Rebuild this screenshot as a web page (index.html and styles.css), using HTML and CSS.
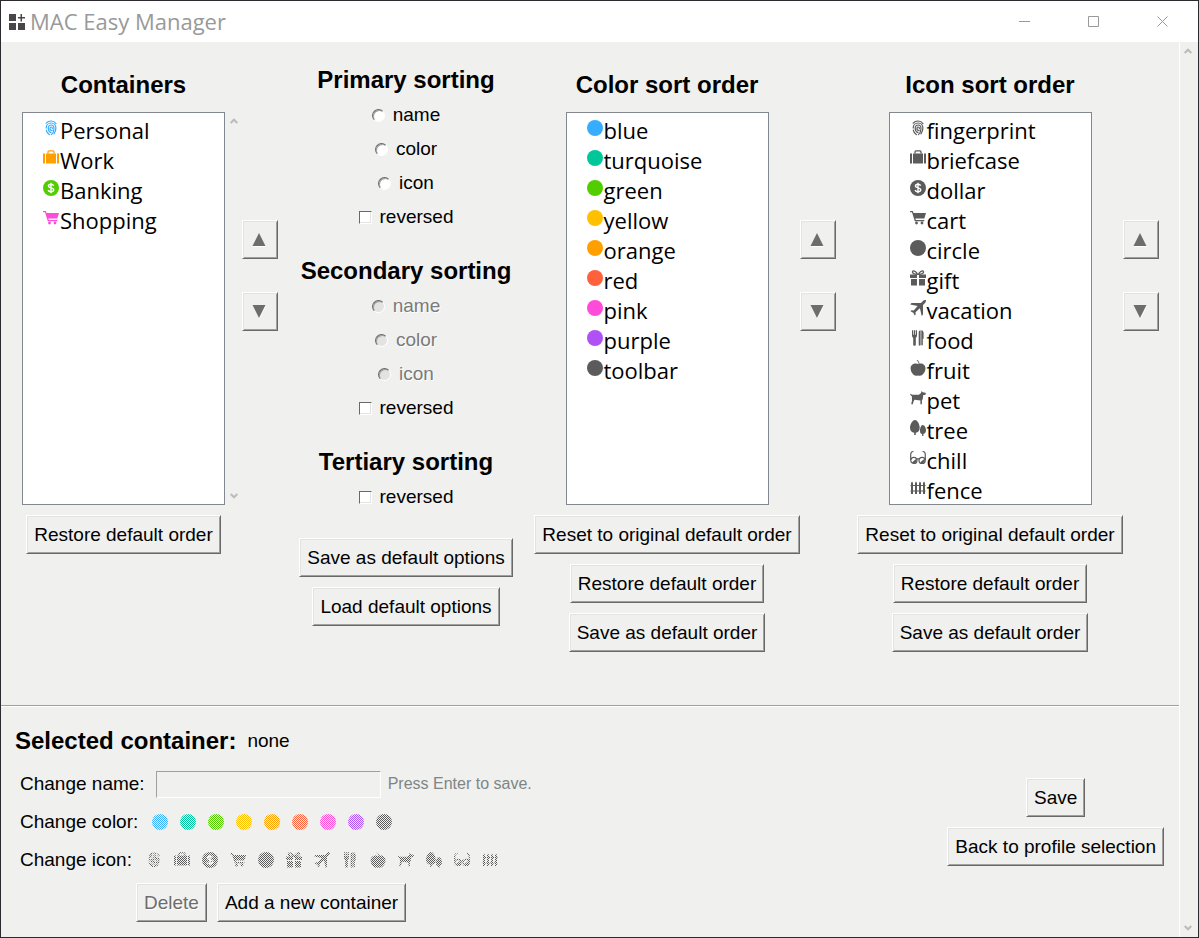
FILE: index.html
```html
<!DOCTYPE html>
<html lang="en">
<head>
<meta charset="utf-8">
<meta name="viewport" content="width=device-width, initial-scale=1">
<title>MAC Easy Manager</title>
<link rel="stylesheet" href="styles.css">
</head>
<body>
<svg class="sprite" aria-hidden="true">
  <symbol id="fingerprint" viewBox="0 0 16 16"><g fill="none" stroke="currentColor" stroke-width="1.200" stroke-linecap="round"><path d="M3.200 3.200C4.400 1.800 6 1 8 1c2.200 0 3.900 1 5 2.600"/><path d="M3.200 8C3.200 5 5.400 3 8 3c2.800 0 4.900 2 4.900 5 0 2.300-.8 4.200-2 5.800"/><path d="M3.300 10.200c.3 1.800 1.400 3.400 3.200 4.500"/><path d="M8.500 14.600c1.600-1.400 2.500-3.600 2.500-6.200C11 6.300 9.800 5 8.100 5 6.400 5 5.200 6.200 5.200 8c0 2.200 1 4 2.800 4.600"/><path d="M9.200 10.600C7.900 10.700 7 9.700 7 8.400c0-.8.500-1.400 1.200-1.400.8 0 1.200.7 1.200 1.600"/></g></symbol>
  <symbol id="briefcase" viewBox="0 0 16 16"><path fill="currentColor" d="M0 3.500h2v10H0zM14 3.500h2v10h-2zM3 3.500h10v10H3z"/><path fill="none" stroke="currentColor" stroke-width="1.300" d="M5 3.600V1.900Q5 .9 6 .9h4q1 0 1 1v1.700"/></symbol>
  <symbol id="dollar" viewBox="0 0 16 16"><circle cx="8" cy="8" r="8" fill="currentColor"/><path class="coin" fill="none" stroke-width="1.400" d="M10.600 5.800C10.300 4.800 9.200 4.300 8 4.300c-1.600 0-2.600.7-2.600 1.800C5.400 8.500 10.700 7.200 10.700 9.800c0 1.200-1.100 1.900-2.700 1.900-1.500 0-2.600-.6-2.900-1.700M8 2.800v10.400"/></symbol>
  <symbol id="cart" viewBox="0 0 16 16"><path fill="currentColor" d="M0 1h2.800l.8 2H16l-1.700 5.600H5.400l.4 1.400h8.500v1.200H4.800L2 2.200H0z"/><circle cx="6.500" cy="13" r="1.400" fill="currentColor"/><circle cx="12" cy="13" r="1.400" fill="currentColor"/></symbol>
  <symbol id="circle" viewBox="0 0 16 16"><circle cx="8" cy="8" r="8" fill="currentColor"/></symbol>
  <symbol id="gift" viewBox="0 0 16 16"><path fill="currentColor" d="M0 4.500h7v3.400H0zM9 4.500h7v3.400H9zM1 9h6v6.500H1zM9 9h6v6.500H9z"/><path fill="none" stroke="currentColor" stroke-width="1.300" d="M7.600 4.400C6.500 1.500 3.300 0 2.500 1.600 2 3 4 4.300 7.600 4.400zM8.400 4.400C9.500 1.500 12.700 0 13.500 1.600 14 3 12 4.300 8.400 4.400z"/></symbol>
  <symbol id="vacation" viewBox="0 0 16 16"><path fill="currentColor" d="M16 0c.2 1.300-.3 2.300-1 3l-2 2v9.500L11.700 16 9.900 8.300 5.500 12.200l.2 2.200-1 1L3.300 12.700.5 11.300l1-1 2.200.2L7.600 6.100.2 4.400 1.500 3H11l2-2c.7-.7 1.700-1.100 3-1z"/></symbol>
  <symbol id="food" viewBox="0 0 16 16"><path fill="currentColor" d="M2 .3h1.200v4.500h.7V.3h1.200v4.500h.7V.3H7v5.200c0 1.200-.6 1.900-1.200 2.300v7c0 1.300-2.600 1.300-2.600 0v-7C2.600 7.400 2 6.700 2 5.500zM8.700 2.500C8.700 1 9.600.3 10.600.3v14.500c0 1.200-1.900 1.200-1.900 0zM11.300.3c1.400 0 2.300 1 2.300 2.900v5.600h-.8v6.400h-1.500z"/></symbol>
  <symbol id="fruit" viewBox="0 0 16 16"><path fill="currentColor" d="M8.700 4.100C8.600 2.400 8 1 6.500.4L7.400 0c1.200.7 1.900 2 2 3.600 2.700-.7 6.100.8 6.100 4.700 0 4.200-3.300 7.500-5.500 7.500-.8 0-1.300-.3-2-.3s-1.200.3-2 .3C3.800 15.800.6 12.500.6 8.300c0-4.100 4.200-5.700 8.100-4.200z"/></symbol>
  <symbol id="pet" viewBox="0 0 16 16"><path fill="currentColor" d="M0 3.700c1 0 1.500 1 2.700 1h6.200L11 3l.5-2 1.300 1.300 2.700.5.500 1.200-1.200.9-1.500.1-.6 4.300-.8 1v3.900h-1.500v-3.700l-5.800-.7-1 1.500-.8 2.900H1.200L2 10.400l-.1-4.100C1.200 6 .4 5.300 0 3.700z"/></symbol>
  <symbol id="tree" viewBox="0 0 16 16"><path fill="currentColor" d="M5 0c2.700 0 4.700 4.800 4.700 7.500 0 3.300-1.500 5-3.900 5.300V15H4.200v-2.200C1.700 12.500 0 10.800 0 7.500 0 4.800 2.300 0 5 0z"/><path fill="currentColor" d="M12.700 5C14.500 5 16 8 16 10c0 2.300-1 3.700-2.600 4V16h-1.300v-2c-1.600-.3-2.100-1.500-2.100-3.600 0-2 .9-5.400 2.700-5.400z"/></symbol>
  <symbol id="chill" viewBox="0 0 16 16"><g fill="none" stroke="currentColor" stroke-width="1.200"><path d="M3.500 1.500C1.500 1.300.7 3 .7 5v5M12.500 1.500c2-.2 2.800 1.500 2.800 3.500v5M6.500 8.800h3"/><circle cx="3.900" cy="10.400" r="3.100"/><circle cx="12.100" cy="10.400" r="3.100"/></g><path fill="currentColor" d="M6.600 8.400v2.900a2.900 2.900 0 0 1-4.700 1.300zM14.800 8.400v2.900a2.900 2.900 0 0 1-4.700 1.300z"/></symbol>
  <symbol id="fence" viewBox="0 0 16 16"><path fill="currentColor" d="M1 3l1-1.500L3 3v11H1zM5 3l1-1.500L7 3v11H5zM9 3l1-1.500L11 3v11H9zM13 3l1-1.500L15 3v11h-2zM.500 5H15.500v1H.500zM.500 10.500H15.500v1H.500z"/></symbol>
  <symbol id="up" viewBox="0 0 14 14"><path fill="#fff" d="M7.500 1L14 14H1z"/><path fill="#6d6d6d" d="M7 0l6.500 13H.5z"/></symbol>
  <symbol id="down" viewBox="0 0 14 14"><path fill="#fff" d="M1 1h13L7.500 14z"/><path fill="#6d6d6d" d="M.5 0h13L7 13z"/></symbol>
  <symbol id="chev-up" viewBox="0 0 8 6"><path fill="none" stroke="#bbb" stroke-width="2" d="M.7 5L4 1.700 7.300 5"/></symbol>
  <symbol id="chev-down" viewBox="0 0 8 6"><path fill="none" stroke="#bbb" stroke-width="2" d="M.7 1L4 4.300 7.300 1"/></symbol>
</svg>

<div class="window">
  <header class="titlebar">
    <svg class="app-icon" viewBox="0 0 16 16" aria-hidden="true"><path fill="#4a4548" d="M0 0h7v7H0zM0 9h7v7H0zM9 9h7v7H9zM11.500 0h1.500v3h3v1.500h-3v3h-1.500v-3H9V3h2.500z"/></svg>
    <h1 class="app-title">MAC Easy Manager</h1>
    <button class="win-btn" aria-label="Minimize"><svg class="win-glyph" viewBox="0 0 11 11"><path d="M0 5.500h11"/></svg></button>
    <button class="win-btn" aria-label="Maximize"><svg class="win-glyph" viewBox="0 0 11 11"><path d="M.5.5h10v10H.5z"/></svg></button>
    <button class="win-btn" aria-label="Close"><svg class="win-glyph" viewBox="0 0 11 11"><path d="M.5.5l10 10M10.500.5l-10 10"/></svg></button>
  </header>

  <div class="body">
    <main class="content">
      <div class="panels">
        <section class="panel panel-containers">
          <h2 class="heading">Containers</h2>
          <ul class="list">
            <li class="item"><svg class="icon blue"><use href="#fingerprint"/></svg><span>Personal</span></li>
            <li class="item"><svg class="icon orange"><use href="#briefcase"/></svg><span>Work</span></li>
            <li class="item"><svg class="icon green"><use href="#dollar"/></svg><span>Banking</span></li>
            <li class="item"><svg class="icon pink"><use href="#cart"/></svg><span>Shopping</span></li>
          </ul>
          <div class="list-scroll"><svg class="chevron"><use href="#chev-up"/></svg><svg class="chevron"><use href="#chev-down"/></svg></div>
          <div class="arrows">
            <button class="btn arrow" aria-label="Move container up"><svg class="tri"><use href="#up"/></svg></button>
            <button class="btn arrow" aria-label="Move container down"><svg class="tri"><use href="#down"/></svg></button>
          </div>
          <div class="actions"><button class="btn">Restore default order</button></div>
        </section>

        <section class="sorting">
          <h2 class="heading">Primary sorting</h2>
          <div class="options">
            <label class="option"><input class="radio" type="radio" name="primary">name</label>
            <label class="option"><input class="radio" type="radio" name="primary">color</label>
            <label class="option"><input class="radio" type="radio" name="primary">icon</label>
            <label class="option"><input class="check" type="checkbox">reversed</label>
          </div>
          <h2 class="heading">Secondary sorting</h2>
          <div class="options">
            <label class="option off"><input class="radio" type="radio" name="secondary" disabled>name</label>
            <label class="option off"><input class="radio" type="radio" name="secondary" disabled>color</label>
            <label class="option off"><input class="radio" type="radio" name="secondary" disabled>icon</label>
            <label class="option"><input class="check" type="checkbox">reversed</label>
          </div>
          <h2 class="heading">Tertiary sorting</h2>
          <div class="options">
            <label class="option"><input class="check" type="checkbox">reversed</label>
          </div>
          <div class="sort-actions">
            <button class="btn">Save as default options</button>
            <button class="btn">Load default options</button>
          </div>
        </section>

        <section class="panel panel-order">
          <h2 class="heading">Color sort order</h2>
          <ul class="list">
            <li class="item"><svg class="icon blue"><use href="#circle"/></svg><span>blue</span></li>
            <li class="item"><svg class="icon turquoise"><use href="#circle"/></svg><span>turquoise</span></li>
            <li class="item"><svg class="icon green"><use href="#circle"/></svg><span>green</span></li>
            <li class="item"><svg class="icon yellow"><use href="#circle"/></svg><span>yellow</span></li>
            <li class="item"><svg class="icon orange"><use href="#circle"/></svg><span>orange</span></li>
            <li class="item"><svg class="icon red"><use href="#circle"/></svg><span>red</span></li>
            <li class="item"><svg class="icon pink"><use href="#circle"/></svg><span>pink</span></li>
            <li class="item"><svg class="icon purple"><use href="#circle"/></svg><span>purple</span></li>
            <li class="item"><svg class="icon toolbar"><use href="#circle"/></svg><span>toolbar</span></li>
          </ul>
          <div class="arrows">
            <button class="btn arrow" aria-label="Move color up"><svg class="tri"><use href="#up"/></svg></button>
            <button class="btn arrow" aria-label="Move color down"><svg class="tri"><use href="#down"/></svg></button>
          </div>
          <div class="actions">
            <button class="btn">Reset to original default order</button>
            <button class="btn">Restore default order</button>
            <button class="btn">Save as default order</button>
          </div>
        </section>

        <section class="panel panel-order">
          <h2 class="heading">Icon sort order</h2>
          <ul class="list">
            <li class="item"><svg class="icon toolbar"><use href="#fingerprint"/></svg><span>fingerprint</span></li>
            <li class="item"><svg class="icon toolbar"><use href="#briefcase"/></svg><span>briefcase</span></li>
            <li class="item"><svg class="icon toolbar"><use href="#dollar"/></svg><span>dollar</span></li>
            <li class="item"><svg class="icon toolbar"><use href="#cart"/></svg><span>cart</span></li>
            <li class="item"><svg class="icon toolbar"><use href="#circle"/></svg><span>circle</span></li>
            <li class="item"><svg class="icon toolbar"><use href="#gift"/></svg><span>gift</span></li>
            <li class="item"><svg class="icon toolbar"><use href="#vacation"/></svg><span>vacation</span></li>
            <li class="item"><svg class="icon toolbar"><use href="#food"/></svg><span>food</span></li>
            <li class="item"><svg class="icon toolbar"><use href="#fruit"/></svg><span>fruit</span></li>
            <li class="item"><svg class="icon toolbar"><use href="#pet"/></svg><span>pet</span></li>
            <li class="item"><svg class="icon toolbar"><use href="#tree"/></svg><span>tree</span></li>
            <li class="item"><svg class="icon toolbar"><use href="#chill"/></svg><span>chill</span></li>
            <li class="item"><svg class="icon toolbar"><use href="#fence"/></svg><span>fence</span></li>
          </ul>
          <div class="arrows">
            <button class="btn arrow" aria-label="Move icon up"><svg class="tri"><use href="#up"/></svg></button>
            <button class="btn arrow" aria-label="Move icon down"><svg class="tri"><use href="#down"/></svg></button>
          </div>
          <div class="actions">
            <button class="btn">Reset to original default order</button>
            <button class="btn">Restore default order</button>
            <button class="btn">Save as default order</button>
          </div>
        </section>
      </div>

      <section class="editor">
        <div class="form">
          <div class="selected"><h2 class="heading">Selected container:</h2><span>none</span></div>
          <div class="row name-row">
            <label for="name">Change name:</label>
            <input class="name-input" id="name" type="text" disabled>
            <span class="hint">Press Enter to save.</span>
          </div>
          <div class="row">
            <span>Change color:</span>
            <div class="swatches">
              <button class="swatch blue" aria-label="blue" disabled><svg class="icon"><use href="#circle"/></svg></button>
              <button class="swatch turquoise" aria-label="turquoise" disabled><svg class="icon"><use href="#circle"/></svg></button>
              <button class="swatch green" aria-label="green" disabled><svg class="icon"><use href="#circle"/></svg></button>
              <button class="swatch yellow" aria-label="yellow" disabled><svg class="icon"><use href="#circle"/></svg></button>
              <button class="swatch orange" aria-label="orange" disabled><svg class="icon"><use href="#circle"/></svg></button>
              <button class="swatch red" aria-label="red" disabled><svg class="icon"><use href="#circle"/></svg></button>
              <button class="swatch pink" aria-label="pink" disabled><svg class="icon"><use href="#circle"/></svg></button>
              <button class="swatch purple" aria-label="purple" disabled><svg class="icon"><use href="#circle"/></svg></button>
              <button class="swatch toolbar" aria-label="toolbar" disabled><svg class="icon"><use href="#circle"/></svg></button>
            </div>
          </div>
          <div class="row">
            <span>Change icon:</span>
            <div class="swatches">
              <button class="swatch toolbar" aria-label="fingerprint" disabled><svg class="icon"><use href="#fingerprint"/></svg></button>
              <button class="swatch toolbar" aria-label="briefcase" disabled><svg class="icon"><use href="#briefcase"/></svg></button>
              <button class="swatch toolbar" aria-label="dollar" disabled><svg class="icon"><use href="#dollar"/></svg></button>
              <button class="swatch toolbar" aria-label="cart" disabled><svg class="icon"><use href="#cart"/></svg></button>
              <button class="swatch toolbar" aria-label="circle" disabled><svg class="icon"><use href="#circle"/></svg></button>
              <button class="swatch toolbar" aria-label="gift" disabled><svg class="icon"><use href="#gift"/></svg></button>
              <button class="swatch toolbar" aria-label="vacation" disabled><svg class="icon"><use href="#vacation"/></svg></button>
              <button class="swatch toolbar" aria-label="food" disabled><svg class="icon"><use href="#food"/></svg></button>
              <button class="swatch toolbar" aria-label="fruit" disabled><svg class="icon"><use href="#fruit"/></svg></button>
              <button class="swatch toolbar" aria-label="pet" disabled><svg class="icon"><use href="#pet"/></svg></button>
              <button class="swatch toolbar" aria-label="tree" disabled><svg class="icon"><use href="#tree"/></svg></button>
              <button class="swatch toolbar" aria-label="chill" disabled><svg class="icon"><use href="#chill"/></svg></button>
              <button class="swatch toolbar" aria-label="fence" disabled><svg class="icon"><use href="#fence"/></svg></button>
            </div>
          </div>
          <div class="form-actions">
            <button class="btn" disabled>Delete</button>
            <button class="btn">Add a new container</button>
          </div>
        </div>
        <div class="page-actions">
          <button class="btn">Save</button>
          <button class="btn">Back to profile selection</button>
        </div>
      </section>
    </main>
    <div class="page-scroll"><svg class="chevron"><use href="#chev-up"/></svg><svg class="chevron"><use href="#chev-down"/></svg></div>
  </div>
</div>
</body>
</html>
```

FILE: styles.css
```css
*, *::before, *::after { box-sizing: border-box; }

body {
  margin: 0;
  background: #f0f0ee;
  color: #000;
  font-family: "Liberation Sans", Arial, sans-serif;
  font-size: 19px;
  line-height: 22px;
}

button, input { font: inherit; color: inherit; margin: 0; }
svg { display: block; flex: none; }
.sprite { display: none; }

.window {
  display: flex;
  flex-direction: column;
  min-height: 100vh;
  border: 1px solid #2c2a2e;
}

/* Title bar */
.titlebar {
  display: flex;
  align-items: center;
  height: 41px;
  padding: 0 1px 0 8px;
  background: #fff;
}
.app-icon { width: 16px; height: 16px; }
.app-title {
  flex: 1;
  margin: 0 0 0 5px;
  padding-bottom: 2px;
  color: #999;
  font: 400 22px/30px "Open Sans", "Noto Sans", sans-serif;
}
.win-btn {
  display: flex;
  align-items: center;
  justify-content: center;
  width: 69px;
  height: 41px;
  padding: 0;
  border: 0;
  background: none;
}
.win-glyph { width: 11px; height: 11px; fill: none; stroke: #999; }

.body { display: flex; flex: 1; }
.content { display: flex; flex: 1; flex-direction: column; min-width: 0; }

.page-scroll, .list-scroll {
  display: flex;
  flex-direction: column;
  align-items: center;
  justify-content: space-between;
  padding: 6px 0;
}
.page-scroll { width: 19px; padding-right: 2px; border-left: 1px solid #fff; }
.chevron { width: 8px; height: 6px; }

/* Upper area */
.panels {
  display: flex;
  flex: 1;
  align-items: flex-start;
  justify-content: space-between;
  padding: 24px 20px 53px 21px;
  border-bottom: 1px solid #a0a0a0;
}
.heading { margin: 0; font-size: 24px; line-height: 28px; font-weight: 700; text-align: center; white-space: nowrap; }

.panel { display: grid; padding-top: 5px; }
.panel .heading { grid-area: head; margin-bottom: 13px; }
.panel-containers {
  grid-template: "head . ." auto "list scroll arrows" auto "actions . ." auto / 203px 17px 36px;
}
.panel-order {
  grid-template: "head ." auto "list arrows" auto "actions ." auto / 266px 36px;
}
.list {
  grid-area: list;
  justify-self: center;
  width: 203px;
  height: 393px;
  margin: 0;
  padding: 0 0 0 20px;
  border: 1px solid #828790;
  background: #fff;
  list-style: none;
}
.item {
  display: flex;
  align-items: center;
  gap: 1px;
  height: 30px;
  font: 400 22px/30px "Open Sans", "Noto Sans", sans-serif;
}
.item span { padding-top: 4px; }
.icon { width: 16px; height: 16px; }
.coin { stroke: #fff; }
.list-scroll { grid-area: scroll; }
.arrows { grid-area: arrows; display: flex; flex-direction: column; gap: 33px; padding-top: 108px; }
.actions, .sort-actions, .page-actions { display: flex; flex-direction: column; align-items: center; gap: 10px; }
.actions { grid-area: actions; padding-top: 10px; }

.blue { color: #37adff; }
.turquoise { color: #00c79a; }
.green { color: #51cd00; }
.yellow { color: #ffc000; }
.orange { color: #ff9f00; }
.red { color: #ff613d; }
.pink { color: #ff4bda; }
.purple { color: #af51f5; }
.toolbar { color: #5b5b5b; }

.btn {
  height: 39px;
  padding: 0 7px;
  border: 1px solid;
  border-color: #fff #696969 #696969 #fff;
  border-radius: 0;
  background: #f0f0ee;
  box-shadow: inset 1px 1px #e3e3e3, inset -1px -1px #a0a0a0;
  white-space: nowrap;
}
.btn:disabled { color: #6d6d6d; text-shadow: 1px 1px #fff; }
.arrow { display: flex; align-items: center; justify-content: center; width: 36px; padding: 0 2px 0 0; }
.tri { width: 14px; height: 14px; }

/* Sorting options */
.sorting { min-width: 214px; }
.options { display: flex; flex-direction: column; align-items: center; padding: 4px 0 23px; }
.option { display: flex; align-items: center; gap: 8px; height: 34px; }
.off { color: #7a7a7a; text-shadow: 1px 1px #fff; }
.radio, .check {
  appearance: none;
  width: 13px;
  height: 13px;
  border: 1px solid;
  border-color: #696969 #fff #fff #696969;
  background: #fff;
}
.radio { border-radius: 50%; box-shadow: inset 1px 1px #a0a0a0; }
.check { box-shadow: inset -1px -1px #e3e3e3; }
.radio:disabled { background: #e3e3e3; }
.sort-actions { padding-top: 1px; }

/* Selected container */
.editor {
  display: flex;
  align-items: flex-start;
  justify-content: space-between;
  padding: 20px 15px 15px 14px;
  border-top: 1px solid #fff;
}
.selected { display: flex; align-items: center; gap: 11px; margin-bottom: 10px; }
.row { display: flex; align-items: center; gap: 14px; height: 38px; padding-left: 5px; }
.name-row { gap: 11px; }
.name-input {
  width: 225px;
  height: 27px;
  padding: 0 4px;
  border: 1px solid;
  border-color: #a0a0a0 #fff #fff #a0a0a0;
  border-radius: 0;
  background: #f0f0ee;
}
.hint { margin-left: -4px; color: #7f8585; font-size: 16px; }
.swatches { display: flex; gap: 12px; }
.swatch {
  display: grid;
  padding: 0;
  border: 0;
  background: none;
}
.swatch .icon, .swatch::after { grid-area: 1 / 1; }
.swatch .coin { stroke: #f0f0ee; }
/* One-pixel checkerboard that greys out a disabled swatch */
.swatch:disabled::after {
  content: "";
  background: conic-gradient(#f0f0ee 25%, transparent 0 50%, #f0f0ee 0 75%, transparent 0) 0 0 / 2px 2px;
}
.form-actions { display: flex; gap: 10px; padding: 4px 0 0 121px; }
.page-actions { padding-top: 51px; }
```
